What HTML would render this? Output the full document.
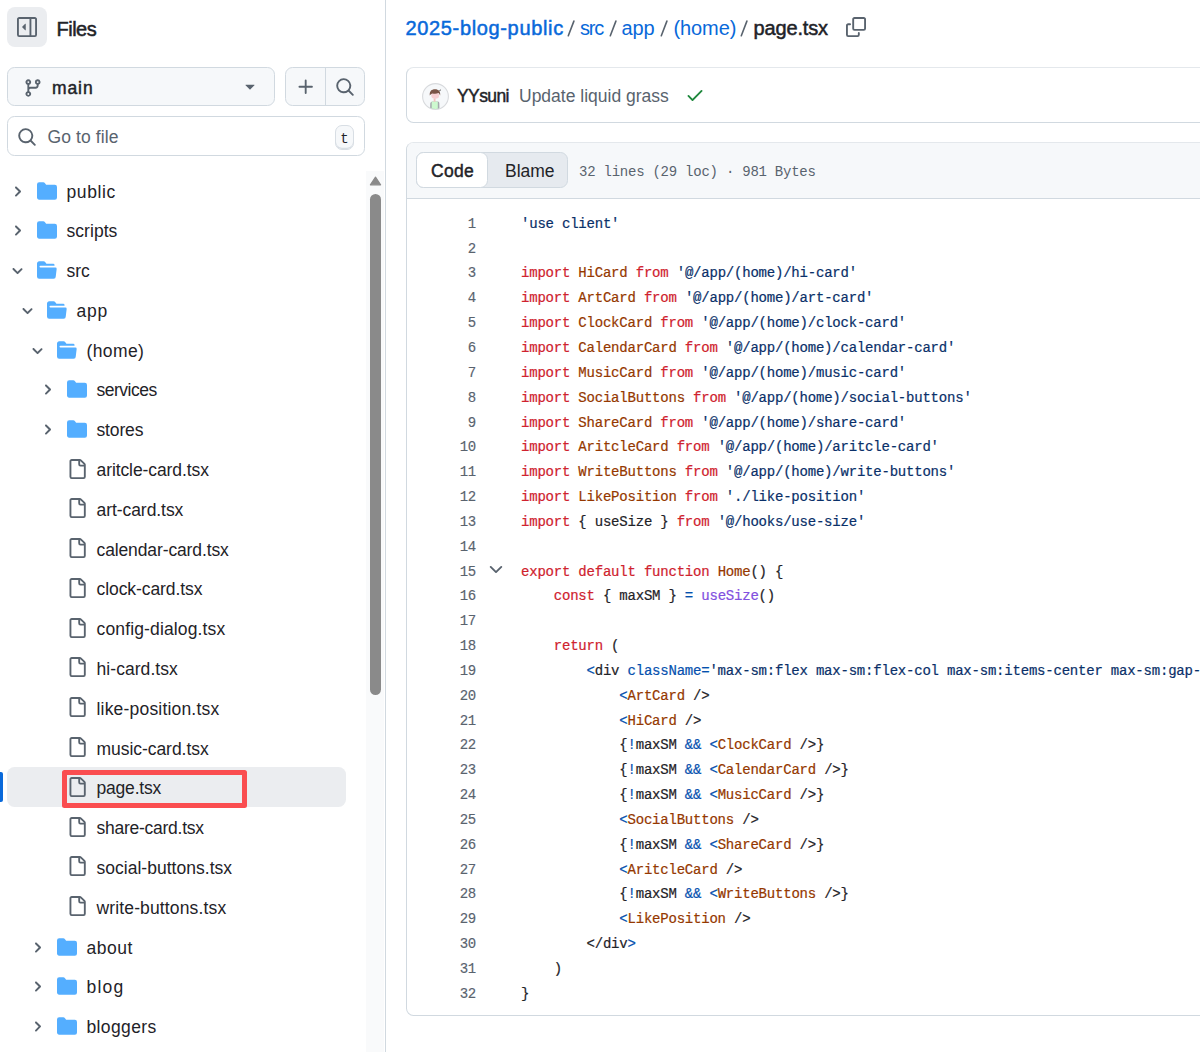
<!DOCTYPE html>
<html><head><meta charset="utf-8">
<style>
*{box-sizing:border-box;margin:0;padding:0}
html,body{width:1200px;height:1052px;overflow:hidden;background:#fff}
body{font-family:"Liberation Sans",sans-serif;color:#1f2328;position:relative}
.abs{position:absolute}
svg{display:block}
/* sidebar */
#sbborder{position:absolute;left:384.5px;top:0;width:1.5px;height:1052px;background:#d1d9e0}
#togglebtn{left:7px;top:7px;width:40px;height:40px;border-radius:8px;background:#ebedf0}
#files{left:56.5px;top:16px;font-size:20px;line-height:26px;color:#1f2328;-webkit-text-stroke:0.5px #1f2328;letter-spacing:-0.5px}
.btn{background:#f6f8fa;border:1.25px solid #d1d9e0;border-radius:7.5px}
#branch{left:7px;top:67px;width:268px;height:39px}
#grp{left:285px;top:67px;width:80px;height:39px}
#grpdiv{left:325px;top:68px;width:1.25px;height:37px;background:#d1d9e0}
#gotofile{left:7px;top:116px;width:358px;height:40px;border:1.25px solid #d1d9e0;border-radius:7.5px;background:#fff}
#kbd{left:335px;top:125.2px;width:19px;height:24.5px;border:1.25px solid #d8dee4;border-radius:7px;background:#f6f8fa;box-shadow:inset 0 -1.25px 0 #d8dee4;font-family:"Liberation Mono",monospace;font-size:14px;line-height:26px;text-align:center;color:#1f2328}
.tt{position:absolute;margin:1.5px 0 0 -1px;line-height:40px;font-size:17.5px;color:#1f2328;white-space:nowrap}
#sel{left:7px;top:767px;width:339px;height:40px;border-radius:7.5px;background:#ebedf0}
#selbar{left:0;top:772px;width:3px;height:30px;border-radius:0 2px 2px 0;background:#0969da}
#redbox{left:62px;top:770px;width:185px;height:38px;border:5px solid #fa4d50;border-radius:2.5px}
#track{left:366px;top:171px;width:18px;height:881px;background:#f9fafb}
#thumb{left:370px;top:194px;width:11px;height:501px;border-radius:5.5px;background:#8a8a8a}
/* main */
.cr{top:15.2px;font-size:20px;line-height:26px;white-space:nowrap;color:#1f2328}
.sp{color:#59636e}
#crumb a{color:#0969da;text-decoration:none}
#crumb .sep{color:#59636e;padding:0 6px}
#crumb b{color:#1f2328}
#commit{left:406px;top:66.5px;width:820px;height:56px;border:1.25px solid #d1d9e0;border-top-color:#e4e8ec;border-radius:7.5px}
#codebox{left:406px;top:142px;width:820px;height:873.5px;border:1.25px solid #d1d9e0;border-top-color:#e4e8ec;border-radius:7.5px;overflow:hidden}
#codehdr{position:absolute;left:0;top:0;right:0;height:55.5px;background:#f6f8fa;border-bottom:1.25px solid #d1d9e0}
#seg{left:9px;top:9px;width:152px;height:36px;border-radius:7.5px;background:#e6eaef;border:1.25px solid #d1d9e0}
#segcode{left:-1.25px;top:-1.25px;width:72px;height:36px;border-radius:7.5px;background:#fff;border:1.25px solid #d1d9e0}
.segt{position:absolute;top:0.75px;line-height:34px;font-size:17.5px;color:#1f2328}
#meta{left:172px;top:1.5px;line-height:55px;font-family:"Liberation Mono",monospace;font-size:14px;color:#59636e;white-space:nowrap;letter-spacing:-0.24px}
.ln{position:absolute;left:406px;width:70px;text-align:right;font-family:"Liberation Mono",monospace;font-size:14px;letter-spacing:-0.24px;color:#59636e;line-height:25px;-webkit-text-stroke:0.15px #59636e}
.cl{position:absolute;left:521px;font-family:"Liberation Mono",monospace;font-size:14px;letter-spacing:-0.21px;color:#1f2328;line-height:25px;white-space:pre;-webkit-text-stroke:0.2px currentColor}
.cl span{-webkit-text-stroke:0.2px currentColor}
.k{color:#cf222e}.e{color:#953800}.s{color:#0a3069}.c{color:#0550ae}.f{color:#8250df}
#mainlbl{left:52px;top:75px;letter-spacing:0.9px;font-size:17.5px;-webkit-text-stroke:0.45px #1f2328;line-height:26px}
#gotolbl{left:47.5px;top:123.7px;font-size:17.5px;letter-spacing:0.1px;line-height:26px;color:#59636e}
#author{left:457px;top:83px;font-size:17.5px;-webkit-text-stroke:0.45px #1f2328;letter-spacing:-0.6px;line-height:26px}
#cmsg{left:519px;top:83px;font-size:17.5px;line-height:26px;color:#59636e;white-space:nowrap}
</style></head><body>
<svg width="0" height="0" style="position:absolute">
<defs>
<symbol id="chr" viewBox="0 0 12 12"><path fill="#59636e" d="M4.7 10c-.2 0-.4-.1-.5-.2-.3-.3-.3-.8 0-1.1L6.9 6 4.2 3.3c-.3-.3-.3-.8 0-1.1.3-.3.8-.3 1.1 0l3.3 3.2c.3.3.3.8 0 1.1L5.3 9.7c-.2.2-.4.3-.6.3Z"/></symbol>
<symbol id="chd" viewBox="0 0 12 12"><path fill="#59636e" d="M6 8.825c-.2 0-.4-.1-.5-.2l-3.3-3.3c-.3-.3-.3-.8 0-1.1.3-.3.8-.3 1.1 0L6 7.025l2.7-2.7c.3-.3.8-.3 1.1 0 .3.3.3.8 0 1.1l-3.2 3.2c-.2.2-.4.3-.7.3Z"/></symbol>
<symbol id="dirc" viewBox="0 0 16 16"><path fill="#54aeff" d="M1.75 1A1.75 1.75 0 0 0 0 2.75v10.5C0 14.216.784 15 1.75 15h12.5A1.75 1.75 0 0 0 16 13.25v-8.5A1.75 1.75 0 0 0 14.25 3H7.5a.25.25 0 0 1-.2-.1l-.9-1.2C6.07 1.26 5.55 1 5 1H1.75Z"/></symbol>
<symbol id="diro" viewBox="0 0 16 16"><path fill="#54aeff" d="M.513 1.513A1.75 1.75 0 0 1 1.75 1h3.5c.55 0 1.07.26 1.4.7l.9 1.2a.25.25 0 0 0 .2.1H13a1 1 0 0 1 1 1v.5H2.75a.75.75 0 0 0 0 1.5h11.978a1 1 0 0 1 .994 1.117L15 13.25A1.75 1.75 0 0 1 13.25 15H1.75A1.75 1.75 0 0 1 0 13.25V2.75c0-.464.184-.91.513-1.237Z"/></symbol>
<symbol id="file" viewBox="0 0 16 16"><path fill="#59636e" d="M2 1.75C2 .784 2.784 0 3.75 0h6.586c.464 0 .909.184 1.237.513l2.914 2.914c.329.328.513.773.513 1.237v9.586A1.75 1.75 0 0 1 13.25 16h-9.5A1.75 1.75 0 0 1 2 14.25Zm1.75-.25a.25.25 0 0 0-.25.25v12.5c0 .138.112.25.25.25h9.5a.25.25 0 0 0 .25-.25V6h-2.75A1.75 1.75 0 0 1 9 4.25V1.5Zm6.75.062V4.25c0 .138.112.25.25.25h2.688l-.011-.013-2.914-2.914-.013-.011Z"/></symbol>
<symbol id="srch" viewBox="0 0 16 16"><path fill="#59636e" d="M10.68 11.74a6 6 0 0 1-7.922-8.982 6 6 0 0 1 8.982 7.922l3.04 3.04a.749.749 0 0 1-.326 1.275.749.749 0 0 1-.734-.215ZM11.5 7a4.499 4.499 0 1 0-8.997 0A4.499 4.499 0 0 0 11.5 7Z"/></symbol>
</defs></svg>
<!-- SIDEBAR -->
<div class="abs" id="togglebtn"></div>
<div class="abs" id="files">Files</div>
<div class="abs btn" id="branch"></div>
<div class="abs btn" id="grp"></div>
<div class="abs" id="grpdiv"></div>
<div class="abs" id="gotofile"></div>
<div class="abs" id="kbd">t</div>
<svg class="abs" style="left:17px;top:17px" width="20" height="20" viewBox="0 0 16 16"><path fill="#59636e" d="M4.177 7.823a.25.25 0 0 0 0 .354l2.396 2.396A.25.25 0 0 0 7 10.396V5.604a.25.25 0 0 0-.427-.177Z"/><path fill="#59636e" d="M1.75 0h12.5C15.216 0 16 .784 16 1.75v12.5A1.75 1.75 0 0 1 14.25 16H1.75A1.75 1.75 0 0 1 0 14.25V1.75C0 .784.784 0 1.75 0ZM1.5 1.75v12.5c0 .138.112.25.25.25H10v-13H1.75a.25.25 0 0 0-.25.25ZM11.5 14.5h2.75a.25.25 0 0 0 .25-.25V1.75a.25.25 0 0 0-.25-.25H11.5Z"/></svg>
<svg class="abs" style="left:22.5px;top:77.75px" width="20" height="20" viewBox="0 0 16 16"><path fill="#59636e" d="M9.5 3.25a2.25 2.25 0 1 1 3 2.122V6A2.5 2.5 0 0 1 10 8.5H6a1 1 0 0 0-1 1v1.128a2.251 2.251 0 1 1-1.5 0V5.372a2.25 2.25 0 1 1 1.5 0v1.836A2.493 2.493 0 0 1 6 7h4a1 1 0 0 0 1-1v-.628A2.25 2.25 0 0 1 9.5 3.25Zm-6 0a.75.75 0 1 0 1.5 0 .75.75 0 0 0-1.5 0Zm8.25-.75a.75.75 0 1 0 0 1.5.75.75 0 0 0 0-1.5ZM4.25 12a.75.75 0 1 0 0 1.5.75.75 0 0 0 0-1.5Z"/></svg>
<div class="abs" id="mainlbl">main</div>
<svg class="abs" style="left:239.5px;top:76.25px" width="20" height="20" viewBox="0 0 16 16"><path fill="#59636e" d="m4.427 7.427 3.396 3.396a.25.25 0 0 0 .354 0l3.396-3.396A.25.25 0 0 0 11.396 7H4.604a.25.25 0 0 0-.177.427Z"/></svg>
<svg class="abs" style="left:295.7px;top:76.9px" width="20" height="20" viewBox="0 0 16 16"><path fill="#59636e" d="M7.75 2a.75.75 0 0 1 .75.75V7h4.25a.75.75 0 0 1 0 1.5H8.5v4.25a.75.75 0 0 1-1.5 0V8.5H2.75a.75.75 0 0 1 0-1.5H7V2.75A.75.75 0 0 1 7.75 2Z"/></svg>
<svg class="abs" style="left:334.6px;top:76.75px" width="20" height="20" viewBox="0 0 16 16"><use href="#srch"/></svg>
<svg class="abs" style="left:17.25px;top:127.25px" width="20" height="20" viewBox="0 0 16 16"><use href="#srch"/></svg>
<div class="abs" id="gotolbl">Go to file</div>

<div id="sbborder"></div>
<div class="abs" id="track"></div>
<div class="abs" id="thumb"></div>
<svg class="abs" style="left:369px;top:176px" width="13" height="10" viewBox="0 0 13 10"><path d="M6.5 1.2 L11.6 8.8 L1.4 8.8Z" fill="#8a8a8a" stroke="#8a8a8a" stroke-width="1.2" stroke-linejoin="round"/></svg>
<div class="abs" id="sel"></div>
<div class="abs" id="selbar"></div>
<svg class="abs" style="left:9.8px;top:183.5px" width="15" height="15" viewBox="0 0 12 12"><use href="#chr"/></svg>
<svg class="abs" style="left:36.8px;top:180.5px" width="20" height="20" viewBox="0 0 16 16"><use href="#dirc"/></svg>
<div class="tt" style="left:67.5px;top:170.0px;letter-spacing:0.6px">public</div>
<svg class="abs" style="left:9.8px;top:223.29px" width="15" height="15" viewBox="0 0 12 12"><use href="#chr"/></svg>
<svg class="abs" style="left:36.8px;top:220.29px" width="20" height="20" viewBox="0 0 16 16"><use href="#dirc"/></svg>
<div class="tt" style="left:67.5px;top:209.79px;letter-spacing:0.05px">scripts</div>
<svg class="abs" style="left:9.8px;top:263.08px" width="15" height="15" viewBox="0 0 12 12"><use href="#chd"/></svg>
<svg class="abs" style="left:36.8px;top:260.08px" width="20" height="20" viewBox="0 0 16 16"><use href="#diro"/></svg>
<div class="tt" style="left:67.5px;top:249.58px;letter-spacing:0px">src</div>
<svg class="abs" style="left:19.8px;top:302.87px" width="15" height="15" viewBox="0 0 12 12"><use href="#chd"/></svg>
<svg class="abs" style="left:46.8px;top:299.87px" width="20" height="20" viewBox="0 0 16 16"><use href="#diro"/></svg>
<div class="tt" style="left:77.5px;top:289.37px;letter-spacing:0.8px">app</div>
<svg class="abs" style="left:29.8px;top:342.66px" width="15" height="15" viewBox="0 0 12 12"><use href="#chd"/></svg>
<svg class="abs" style="left:56.8px;top:339.66px" width="20" height="20" viewBox="0 0 16 16"><use href="#diro"/></svg>
<div class="tt" style="left:87.5px;top:329.16px;letter-spacing:0.4px">(home)</div>
<svg class="abs" style="left:39.8px;top:382.45px" width="15" height="15" viewBox="0 0 12 12"><use href="#chr"/></svg>
<svg class="abs" style="left:66.8px;top:379.45px" width="20" height="20" viewBox="0 0 16 16"><use href="#dirc"/></svg>
<div class="tt" style="left:97.5px;top:368.95px;letter-spacing:-0.49px">services</div>
<svg class="abs" style="left:39.8px;top:422.24px" width="15" height="15" viewBox="0 0 12 12"><use href="#chr"/></svg>
<svg class="abs" style="left:66.8px;top:419.24px" width="20" height="20" viewBox="0 0 16 16"><use href="#dirc"/></svg>
<div class="tt" style="left:97.5px;top:408.74px;letter-spacing:-0.14px">stores</div>
<svg class="abs" style="left:66.8px;top:458.53px" width="20" height="20" viewBox="0 0 16 16"><use href="#file"/></svg>
<div class="tt" style="left:97.5px;top:448.53px;letter-spacing:-0.09px">aritcle-card.tsx</div>
<svg class="abs" style="left:66.8px;top:498.32px" width="20" height="20" viewBox="0 0 16 16"><use href="#file"/></svg>
<div class="tt" style="left:97.5px;top:488.32px;letter-spacing:-0.06px">art-card.tsx</div>
<svg class="abs" style="left:66.8px;top:538.11px" width="20" height="20" viewBox="0 0 16 16"><use href="#file"/></svg>
<div class="tt" style="left:97.5px;top:528.11px;letter-spacing:-0.12px">calendar-card.tsx</div>
<svg class="abs" style="left:66.8px;top:577.9px" width="20" height="20" viewBox="0 0 16 16"><use href="#file"/></svg>
<div class="tt" style="left:97.5px;top:567.9px;letter-spacing:-0.08px">clock-card.tsx</div>
<svg class="abs" style="left:66.8px;top:617.69px" width="20" height="20" viewBox="0 0 16 16"><use href="#file"/></svg>
<div class="tt" style="left:97.5px;top:607.69px;letter-spacing:0.14px">config-dialog.tsx</div>
<svg class="abs" style="left:66.8px;top:657.48px" width="20" height="20" viewBox="0 0 16 16"><use href="#file"/></svg>
<div class="tt" style="left:97.5px;top:647.48px;letter-spacing:0.06px">hi-card.tsx</div>
<svg class="abs" style="left:66.8px;top:697.27px" width="20" height="20" viewBox="0 0 16 16"><use href="#file"/></svg>
<div class="tt" style="left:97.5px;top:687.27px;letter-spacing:0.19px">like-position.tsx</div>
<svg class="abs" style="left:66.8px;top:737.06px" width="20" height="20" viewBox="0 0 16 16"><use href="#file"/></svg>
<div class="tt" style="left:97.5px;top:727.06px;letter-spacing:-0.05px">music-card.tsx</div>
<svg class="abs" style="left:66.8px;top:776.85px" width="20" height="20" viewBox="0 0 16 16"><use href="#file"/></svg>
<div class="tt" style="left:97.5px;top:766.85px;letter-spacing:-0.2px">page.tsx</div>
<svg class="abs" style="left:66.8px;top:816.64px" width="20" height="20" viewBox="0 0 16 16"><use href="#file"/></svg>
<div class="tt" style="left:97.5px;top:806.64px;letter-spacing:-0.26px">share-card.tsx</div>
<svg class="abs" style="left:66.8px;top:856.43px" width="20" height="20" viewBox="0 0 16 16"><use href="#file"/></svg>
<div class="tt" style="left:97.5px;top:846.43px;letter-spacing:0.02px">social-buttons.tsx</div>
<svg class="abs" style="left:66.8px;top:896.22px" width="20" height="20" viewBox="0 0 16 16"><use href="#file"/></svg>
<div class="tt" style="left:97.5px;top:886.22px;letter-spacing:0.14px">write-buttons.tsx</div>
<svg class="abs" style="left:29.8px;top:939.51px" width="15" height="15" viewBox="0 0 12 12"><use href="#chr"/></svg>
<svg class="abs" style="left:56.8px;top:936.51px" width="20" height="20" viewBox="0 0 16 16"><use href="#dirc"/></svg>
<div class="tt" style="left:87.5px;top:926.01px;letter-spacing:0.5px">about</div>
<svg class="abs" style="left:29.8px;top:979.3px" width="15" height="15" viewBox="0 0 12 12"><use href="#chr"/></svg>
<svg class="abs" style="left:56.8px;top:976.3px" width="20" height="20" viewBox="0 0 16 16"><use href="#dirc"/></svg>
<div class="tt" style="left:87.5px;top:965.8px;letter-spacing:1.2px">blog</div>
<svg class="abs" style="left:29.8px;top:1019.0899999999999px" width="15" height="15" viewBox="0 0 12 12"><use href="#chr"/></svg>
<svg class="abs" style="left:56.8px;top:1016.0899999999999px" width="20" height="20" viewBox="0 0 16 16"><use href="#dirc"/></svg>
<div class="tt" style="left:87.5px;top:1005.59px;letter-spacing:0.37px">bloggers</div>
<div class="abs" id="redbox"></div>

<!-- MAIN -->
<div class="abs cr" style="left:405.5px;color:#0969da;-webkit-text-stroke:0.5px #0969da;letter-spacing:0.65px">2025-blog-public</div>
<div class="abs cr" style="left:580px;color:#0969da;letter-spacing:-1.2px">src</div>
<div class="abs cr" style="left:621.5px;color:#0969da;letter-spacing:-0.1px">app</div>
<div class="abs cr" style="left:673.5px;color:#0969da;letter-spacing:-0.1px">(home)</div>
<svg class="abs" style="left:566.5px;top:18px" width="10" height="20" viewBox="0 0 10 20"><line x1="1.3" y1="17.7" x2="6.9" y2="3.1" stroke="#59636e" stroke-width="1.6" stroke-linecap="round"/></svg>
<svg class="abs" style="left:609px;top:18px" width="10" height="20" viewBox="0 0 10 20"><line x1="1.3" y1="17.7" x2="6.9" y2="3.1" stroke="#59636e" stroke-width="1.6" stroke-linecap="round"/></svg>
<svg class="abs" style="left:660px;top:18px" width="10" height="20" viewBox="0 0 10 20"><line x1="1.3" y1="17.7" x2="6.9" y2="3.1" stroke="#59636e" stroke-width="1.6" stroke-linecap="round"/></svg>
<svg class="abs" style="left:740.2px;top:18px" width="10" height="20" viewBox="0 0 10 20"><line x1="1.3" y1="17.7" x2="6.9" y2="3.1" stroke="#59636e" stroke-width="1.6" stroke-linecap="round"/></svg>
<div class="abs cr" style="left:753.5px;-webkit-text-stroke:0.5px #1f2328;letter-spacing:-0.15px">page.tsx</div>
<div class="abs" id="commit"></div>
<div class="abs" id="codebox"><div id="codehdr">
<div class="abs" id="seg"><div class="abs" id="segcode"></div><div class="segt" style="left:14px;-webkit-text-stroke:0.45px #1f2328;letter-spacing:0.3px">Code</div><div class="segt" style="left:88px;font-weight:normal">Blame</div></div>
<div class="abs" id="meta">32 lines (29 loc) · 981 Bytes</div>
</div></div>

<svg class="abs" style="left:846px;top:17px" width="20" height="20" viewBox="0 0 16 16"><path fill="#59636e" d="M0 6.75C0 5.784.784 5 1.75 5h1.5a.75.75 0 0 1 0 1.5h-1.5a.25.25 0 0 0-.25.25v7.5c0 .138.112.25.25.25h7.5a.25.25 0 0 0 .25-.25v-1.5a.75.75 0 0 1 1.5 0v1.5A1.75 1.75 0 0 1 9.25 16h-7.5A1.75 1.75 0 0 1 0 14.25Z"/><path fill="#59636e" d="M5 1.75C5 .784 5.784 0 6.75 0h7.5C15.216 0 16 .784 16 1.75v7.5A1.75 1.75 0 0 1 14.25 11h-7.5A1.75 1.75 0 0 1 5 9.25Zm1.75-.25a.25.25 0 0 0-.25.25v7.5c0 .138.112.25.25.25h7.5a.25.25 0 0 0 .25-.25v-7.5a.25.25 0 0 0-.25-.25Z"/></svg>
<svg class="abs" style="left:422px;top:82.5px" width="27" height="27" viewBox="0 0 27 27">
<defs><clipPath id="avc"><circle cx="13.5" cy="13.5" r="12.5"/></clipPath></defs>
<circle cx="13.5" cy="13.5" r="12.9" fill="#f6f8fa" stroke="#d8dadd" stroke-width="1.1"/>
<g clip-path="url(#avc)">
<path d="M8 27 L8.3 20 Q8.8 18.6 10.5 18.5 L16 18.5 Q17.2 18.7 17.3 20 L17.5 27Z" fill="#a4a9ad"/>
<rect x="9.7" y="18.5" width="6.1" height="9" fill="#cdf9cf"/>
<rect x="11.7" y="15.2" width="1.8" height="3.5" fill="#f2c4bf"/>
<ellipse cx="13.2" cy="12.6" rx="3.9" ry="3.2" fill="#f7d0d4"/>
<path d="M7.8 12.6 C7.2 8.2 9.6 6.2 13 6.2 C16.6 6.2 18.8 8.3 18.1 12.6 C17.6 11 17 10.2 16.2 10 C15 10.8 12.5 10.9 10.6 10.4 C9.5 10.6 8.5 11.3 7.8 12.6Z" fill="#7a5447"/>
<path d="M16.6 7.6 L19.2 6.3 L18.4 8Z" fill="#6b6b6b"/>
</g>
</svg>
<div class="abs" id="author">YYsuni</div>
<div class="abs" id="cmsg">Update liquid grass</div>
<svg class="abs" style="left:684.5px;top:85px" width="20" height="20" viewBox="0 0 16 16"><path fill="#1f883d" d="M13.78 4.22a.75.75 0 0 1 0 1.06l-7.25 7.25a.75.75 0 0 1-1.06 0L2.22 9.28a.751.751 0 0 1 .018-1.042.751.751 0 0 1 1.042-.018L6 10.94l6.72-6.72a.75.75 0 0 1 1.06 0Z"/></svg>
<svg class="abs" style="left:486px;top:559px" width="20" height="20" viewBox="0 0 20 20"><path d="M4.7 7.9 L10 13.1 L15.3 7.9" fill="none" stroke="#59636e" stroke-width="1.9" stroke-linecap="round" stroke-linejoin="round"/></svg>
<div class="ln" style="top:211.8px">1</div>
<div class="cl" style="top:211.8px"><span class="s">&#x27;use client&#x27;</span></div>
<div class="ln" style="top:236.64px">2</div>
<div class="ln" style="top:261.48px">3</div>
<div class="cl" style="top:261.48px"><span class="k">import</span> <span class="e">HiCard</span> <span class="k">from</span> <span class="s">&#x27;@/app/(home)/hi-card&#x27;</span></div>
<div class="ln" style="top:286.32px">4</div>
<div class="cl" style="top:286.32px"><span class="k">import</span> <span class="e">ArtCard</span> <span class="k">from</span> <span class="s">&#x27;@/app/(home)/art-card&#x27;</span></div>
<div class="ln" style="top:311.16px">5</div>
<div class="cl" style="top:311.16px"><span class="k">import</span> <span class="e">ClockCard</span> <span class="k">from</span> <span class="s">&#x27;@/app/(home)/clock-card&#x27;</span></div>
<div class="ln" style="top:336.0px">6</div>
<div class="cl" style="top:336.0px"><span class="k">import</span> <span class="e">CalendarCard</span> <span class="k">from</span> <span class="s">&#x27;@/app/(home)/calendar-card&#x27;</span></div>
<div class="ln" style="top:360.84px">7</div>
<div class="cl" style="top:360.84px"><span class="k">import</span> <span class="e">MusicCard</span> <span class="k">from</span> <span class="s">&#x27;@/app/(home)/music-card&#x27;</span></div>
<div class="ln" style="top:385.68px">8</div>
<div class="cl" style="top:385.68px"><span class="k">import</span> <span class="e">SocialButtons</span> <span class="k">from</span> <span class="s">&#x27;@/app/(home)/social-buttons&#x27;</span></div>
<div class="ln" style="top:410.52px">9</div>
<div class="cl" style="top:410.52px"><span class="k">import</span> <span class="e">ShareCard</span> <span class="k">from</span> <span class="s">&#x27;@/app/(home)/share-card&#x27;</span></div>
<div class="ln" style="top:435.36px">10</div>
<div class="cl" style="top:435.36px"><span class="k">import</span> <span class="e">AritcleCard</span> <span class="k">from</span> <span class="s">&#x27;@/app/(home)/aritcle-card&#x27;</span></div>
<div class="ln" style="top:460.2px">11</div>
<div class="cl" style="top:460.2px"><span class="k">import</span> <span class="e">WriteButtons</span> <span class="k">from</span> <span class="s">&#x27;@/app/(home)/write-buttons&#x27;</span></div>
<div class="ln" style="top:485.04px">12</div>
<div class="cl" style="top:485.04px"><span class="k">import</span> <span class="e">LikePosition</span> <span class="k">from</span> <span class="s">&#x27;./like-position&#x27;</span></div>
<div class="ln" style="top:509.88px">13</div>
<div class="cl" style="top:509.88px"><span class="k">import</span> { useSize } <span class="k">from</span> <span class="s">&#x27;@/hooks/use-size&#x27;</span></div>
<div class="ln" style="top:534.72px">14</div>
<div class="ln" style="top:559.56px">15</div>
<div class="cl" style="top:559.56px"><span class="k">export</span> <span class="k">default</span> <span class="k">function</span> <span class="e">Home</span>() {</div>
<div class="ln" style="top:584.4px">16</div>
<div class="cl" style="top:584.4px">    <span class="k">const</span> { maxSM } <span class="c">=</span> <span class="f">useSize</span>()</div>
<div class="ln" style="top:609.24px">17</div>
<div class="ln" style="top:634.08px">18</div>
<div class="cl" style="top:634.08px">    <span class="k">return</span> (</div>
<div class="ln" style="top:658.92px">19</div>
<div class="cl" style="top:658.92px">        <span class="c">&lt;</span>div <span class="c">className=</span><span class="s">&#x27;max-sm:flex max-sm:flex-col max-sm:items-center max-sm:gap-6 max-sm:pt-28 max-sm:pb-20&#x27;</span><span class="c">&gt;</span></div>
<div class="ln" style="top:683.76px">20</div>
<div class="cl" style="top:683.76px">            <span class="c">&lt;</span><span class="e">ArtCard</span> /&gt;</div>
<div class="ln" style="top:708.6px">21</div>
<div class="cl" style="top:708.6px">            <span class="c">&lt;</span><span class="e">HiCard</span> /&gt;</div>
<div class="ln" style="top:733.44px">22</div>
<div class="cl" style="top:733.44px">            {<span class="c">!</span>maxSM <span class="c">&amp;&amp;</span> <span class="c">&lt;</span><span class="e">ClockCard</span> /&gt;}</div>
<div class="ln" style="top:758.28px">23</div>
<div class="cl" style="top:758.28px">            {<span class="c">!</span>maxSM <span class="c">&amp;&amp;</span> <span class="c">&lt;</span><span class="e">CalendarCard</span> /&gt;}</div>
<div class="ln" style="top:783.12px">24</div>
<div class="cl" style="top:783.12px">            {<span class="c">!</span>maxSM <span class="c">&amp;&amp;</span> <span class="c">&lt;</span><span class="e">MusicCard</span> /&gt;}</div>
<div class="ln" style="top:807.96px">25</div>
<div class="cl" style="top:807.96px">            <span class="c">&lt;</span><span class="e">SocialButtons</span> /&gt;</div>
<div class="ln" style="top:832.8px">26</div>
<div class="cl" style="top:832.8px">            {<span class="c">!</span>maxSM <span class="c">&amp;&amp;</span> <span class="c">&lt;</span><span class="e">ShareCard</span> /&gt;}</div>
<div class="ln" style="top:857.64px">27</div>
<div class="cl" style="top:857.64px">            <span class="c">&lt;</span><span class="e">AritcleCard</span> /&gt;</div>
<div class="ln" style="top:882.48px">28</div>
<div class="cl" style="top:882.48px">            {<span class="c">!</span>maxSM <span class="c">&amp;&amp;</span> <span class="c">&lt;</span><span class="e">WriteButtons</span> /&gt;}</div>
<div class="ln" style="top:907.32px">29</div>
<div class="cl" style="top:907.32px">            <span class="c">&lt;</span><span class="e">LikePosition</span> /&gt;</div>
<div class="ln" style="top:932.16px">30</div>
<div class="cl" style="top:932.16px">        &lt;/div<span class="c">&gt;</span></div>
<div class="ln" style="top:957.0px">31</div>
<div class="cl" style="top:957.0px">    )</div>
<div class="ln" style="top:981.84px">32</div>
<div class="cl" style="top:981.84px">}</div>
</body></html>
